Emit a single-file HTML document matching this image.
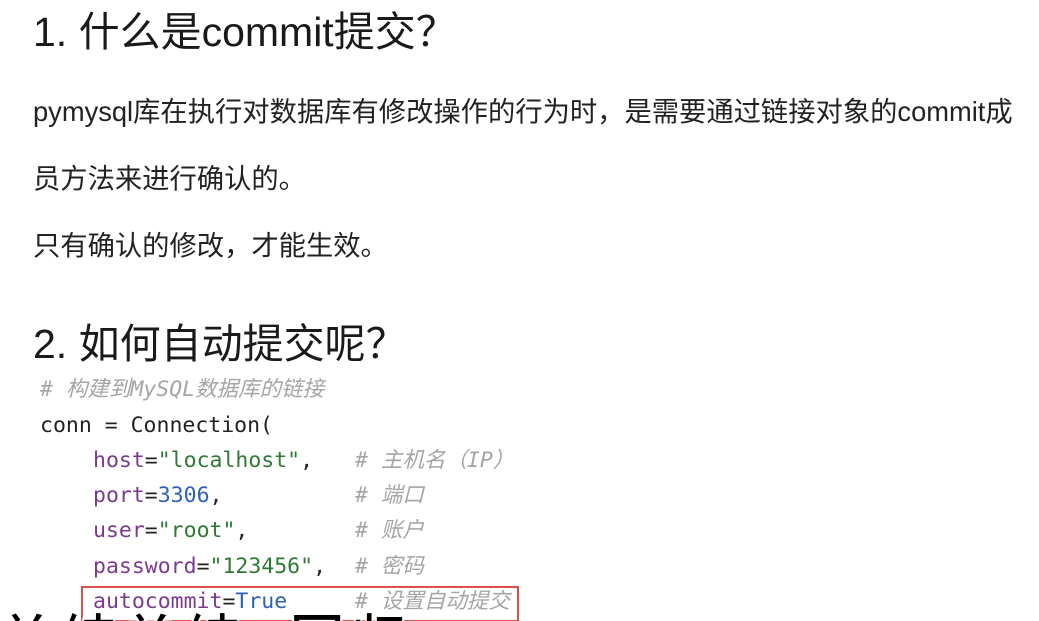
<!DOCTYPE html>
<html><head><meta charset="utf-8"><style>
html,body{margin:0;width:1039px;height:621px;overflow:hidden;background:#fff}
body{position:relative;font-family:"Liberation Sans","Noto Sans CJK SC",sans-serif;color:#1a1a1a}
.a{position:absolute;white-space:pre}
.h{font-size:41px;line-height:46px}
.p{font-size:27.3px;line-height:32px;color:#222}
.c{font-family:"DejaVu Sans Mono","Liberation Mono","Noto Sans CJK SC",monospace;font-size:21.5px;line-height:26px;color:#222}
.cm{color:#a5a5a5;font-style:italic}
.k{color:#7a3b8e}.s{color:#2f7a33}.n{color:#2b62b8}
.sub{font-size:56px;font-weight:bold;color:#000;-webkit-text-stroke:2px #fff;letter-spacing:6px}
</style></head><body>
<div class="a h" style="left:33px;top:9px">1. 什么是commit提交？</div>
<div class="a p" style="left:33px;top:96px">pymysql库在执行对数据库有修改操作的行为时，是需要通过链接对象的commit成</div>
<div class="a p" style="left:33px;top:163px">员方法来进行确认的。</div>
<div class="a p" style="left:33px;top:230px">只有确认的修改，才能生效。</div>
<div class="a h" style="left:33px;top:321px">2. 如何自动提交呢？</div>
<div class="a c cm" style="left:40px;top:377px"># 构建到MySQL数据库的链接</div>
<div class="a c" style="left:40px;top:413px">conn = Connection(</div>
<div class="a c" style="left:93px;top:448px"><span class="k">host</span>=<span class="s">"localhost"</span>,</div>
<div class="a c" style="left:93px;top:483px"><span class="k">port</span>=<span class="n">3306</span>,</div>
<div class="a c" style="left:93px;top:518px"><span class="k">user</span>=<span class="s">"root"</span>,</div>
<div class="a c" style="left:93px;top:554px"><span class="k">password</span>=<span class="s">"123456"</span>,</div>
<div class="a c" style="left:93px;top:589px"><span class="k">autocommit</span>=<span class="n">True</span></div>
<div class="a c cm" style="left:355px;top:448px"># 主机名（IP）</div>
<div class="a c cm" style="left:355px;top:483px"># 端口</div>
<div class="a c cm" style="left:355px;top:518px"># 账户</div>
<div class="a c cm" style="left:355px;top:554px"># 密码</div>
<div class="a c cm" style="left:355px;top:589px"># 设置自动提交</div>
<div class="a" style="left:81px;top:586px;width:434px;height:32px;border:2px solid #d9524a"></div>
<div class="a" style="left:0;top:590px;width:1039px;height:31px;overflow:hidden"><div class="a sub" style="left:-2px;top:6px">单纯单纯  回归</div></div>
</body></html>
